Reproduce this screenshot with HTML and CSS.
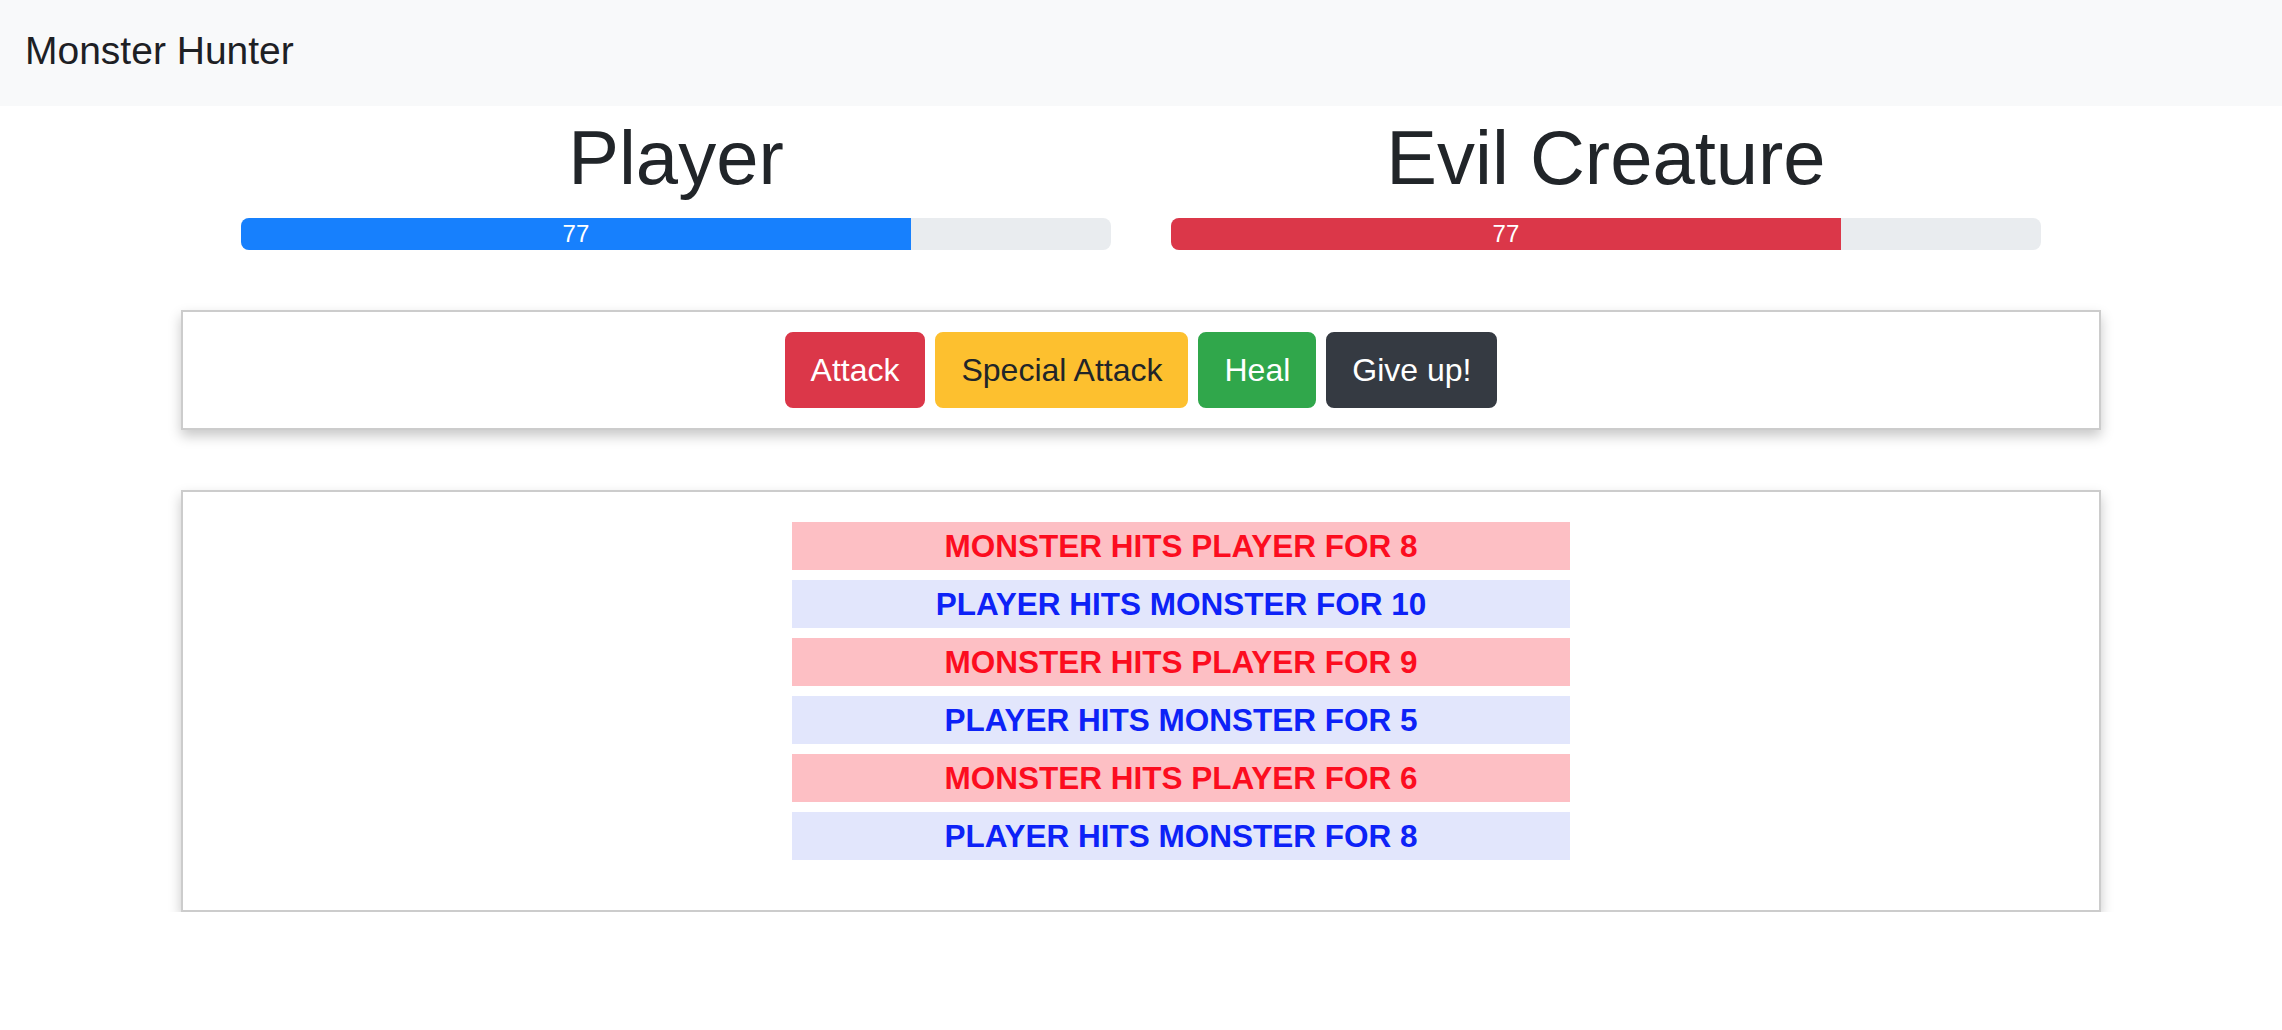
FILE: index.html
```html
<!DOCTYPE html>
<html lang="en">
<head>
<meta charset="utf-8">
<title>Monster Hunter</title>
<link rel="stylesheet" href="styles.css">
</head>
<body>
<nav class="navbar">
  <span class="brand">Monster Hunter</span>
</nav>
<main class="container">
  <section class="fighters">
    <div class="fighter">
      <h1 class="fighter-name">Player</h1>
      <div class="progress">
        <div class="progress-bar bar-player" style="width: 77%">77</div>
      </div>
    </div>
    <div class="fighter">
      <h1 class="fighter-name">Evil Creature</h1>
      <div class="progress">
        <div class="progress-bar bar-monster" style="width: 77%">77</div>
      </div>
    </div>
  </section>
  <section class="panel controls">
    <button class="btn btn-danger">Attack</button>
    <button class="btn btn-warning">Special Attack</button>
    <button class="btn btn-success">Heal</button>
    <button class="btn btn-dark">Give up!</button>
  </section>
  <section class="panel log">
    <ul class="log-list">
      <li class="monster-turn">Monster hits Player for 8</li>
      <li class="player-turn">Player hits Monster for 10</li>
      <li class="monster-turn">Monster hits Player for 9</li>
      <li class="player-turn">Player hits Monster for 5</li>
      <li class="monster-turn">Monster hits Player for 6</li>
      <li class="player-turn">Player hits Monster for 8</li>
    </ul>
  </section>
</main>
</body>
</html>
```
FILE: styles.css
```css
* { box-sizing: border-box; }

html, body {
  margin: 0;
  padding: 0;
  background: #ffffff;
  color: #212529;
  font-family: "Liberation Sans", Arial, sans-serif;
}

.navbar {
  height: 106px;
  background: #f8f9fa;
  padding: 22px 25px 0;
}

.brand {
  display: inline-block;
  font-size: 39px;
  line-height: 1.5;
  color: #1d2024;
}

.container {
  width: 1920px;
  margin: 0 auto;
}

.fighters {
  margin-top: 6px;
  padding: 0 60px;
  display: grid;
  grid-template-columns: 1fr 1fr;
  column-gap: 60px;
}

.fighter-name {
  margin: 0 0 15px;
  font-size: 76px;
  font-weight: 400;
  line-height: 1.2;
  text-align: center;
  color: #212529;
}

.progress {
  height: 32px;
  border-radius: 8px;
  background: #e9ecef;
  overflow: hidden;
  display: flex;
}

.progress-bar {
  height: 100%;
  display: flex;
  align-items: center;
  justify-content: center;
  color: #ffffff;
  font-size: 24px;
  line-height: 32px;
}

.bar-player { background: #1780fd; }
.bar-monster { background: #db3749; }

.panel {
  margin-top: 60px;
  border: 2px solid #cccccc;
  padding: 20px;
  box-shadow: 0 6px 12px #c8c8c8;
  text-align: center;
}

.controls {
  display: flex;
  justify-content: center;
  gap: 10px;
}

.btn {
  height: 76px;
  padding: 0 24px;
  border: 2px solid transparent;
  border-radius: 8px;
  font-family: "Liberation Sans", Arial, sans-serif;
  font-size: 32px;
  line-height: 1.5;
  cursor: pointer;
}

.btn-danger { background: #db3749; border-color: #db3749; color: #ffffff; }
.btn-warning { background: #fdc02f; border-color: #fdc02f; color: #212529; }
.btn-success { background: #30a74b; border-color: #30a74b; color: #ffffff; }
.btn-dark { background: #353a42; border-color: #353a42; color: #ffffff; }

.log-list {
  list-style: none;
  margin: 0 0 30px;
  padding: 0 0 0 80px;
  font-weight: 700;
  text-transform: uppercase;
  font-size: 31.5px;
}

.log-list li {
  width: 778px;
  height: 48px;
  margin: 10px auto;
  padding: 3px 6px;
  line-height: 42px;
  text-align: center;
}

.monster-turn { color: #fc0d1f; background: #fdbfc4; }
.player-turn { color: #0d22f7; background: #e2e6fc; }
```
